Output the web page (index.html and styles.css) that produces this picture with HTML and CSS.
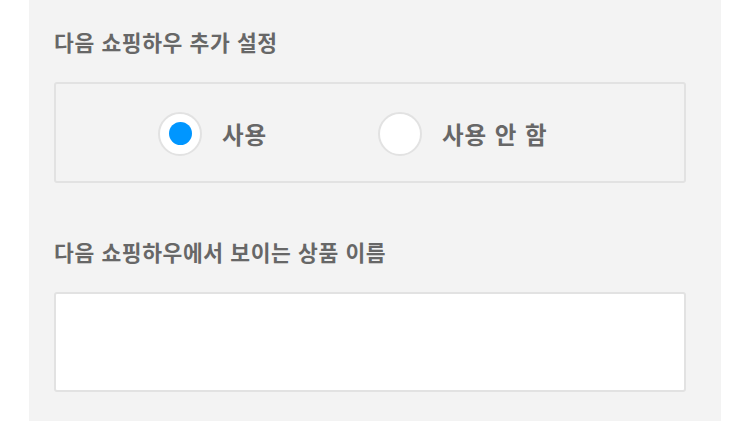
FILE: index.html
```html
<!DOCTYPE html>
<html lang="ko">
<head>
<meta charset="utf-8">
<link rel="stylesheet" href="styles.css">
</head>
<body>
<div class="panel">
  <h2 class="title">다음 쇼핑하우 추가 설정</h2>
  <div class="choice-box">
    <label class="option">
      <span class="radio checked"><span class="dot"></span></span>
      <span class="label">사용</span>
    </label>
    <label class="option">
      <span class="radio"></span>
      <span class="label">사용 안 함</span>
    </label>
  </div>
  <h2 class="title second">다음 쇼핑하우에서 보이는 상품 이름</h2>
  <div class="input-box"></div>
</div>
</body>
</html>
```
FILE: styles.css
```css
html, body {
  margin: 0;
  padding: 0;
  background: #ffffff;
  height: 100%;
}
body {
  font-family: "Noto Sans CJK KR", "Noto Sans", sans-serif;
  overflow: hidden;
}
.panel {
  margin-left: 29px;
  width: 692px;
  min-height: 100%;
  box-sizing: border-box;
  background: #f3f3f3;
  padding: 29px 35px 0 25px;
}
.title {
  margin: 0;
  font-size: 21.5px;
  line-height: 25px;
  font-weight: 700;
  color: #676767;
  letter-spacing: 0.6px;
}
.title.second {
  margin-top: 56px;
}
.choice-box {
  margin-top: 28px;
  height: 101px;
  box-sizing: border-box;
  border: 2px solid #e2e2e2;
  border-radius: 3px;
  display: flex;
  align-items: center;
  padding-left: 102px;
  padding-top: 2px;
}
.option {
  width: 220px;
  display: flex;
  align-items: center;
  gap: 20px;
}
.radio {
  width: 44px;
  height: 44px;
  box-sizing: border-box;
  border: 2px solid #e2e2e2;
  border-radius: 50%;
  background: #ffffff;
  display: flex;
  align-items: center;
  justify-content: center;
}
.dot {
  width: 23px;
  height: 23px;
  border-radius: 50%;
  background: #0096ff;
}
.label {
  font-size: 23.5px;
  font-weight: 700;
  color: #676767;
  line-height: 30px;
  letter-spacing: 1px;
}
.input-box {
  margin-top: 28px;
  height: 100px;
  box-sizing: border-box;
  border: 2px solid #e2e2e2;
  border-radius: 3px;
  background: #ffffff;
}
```
